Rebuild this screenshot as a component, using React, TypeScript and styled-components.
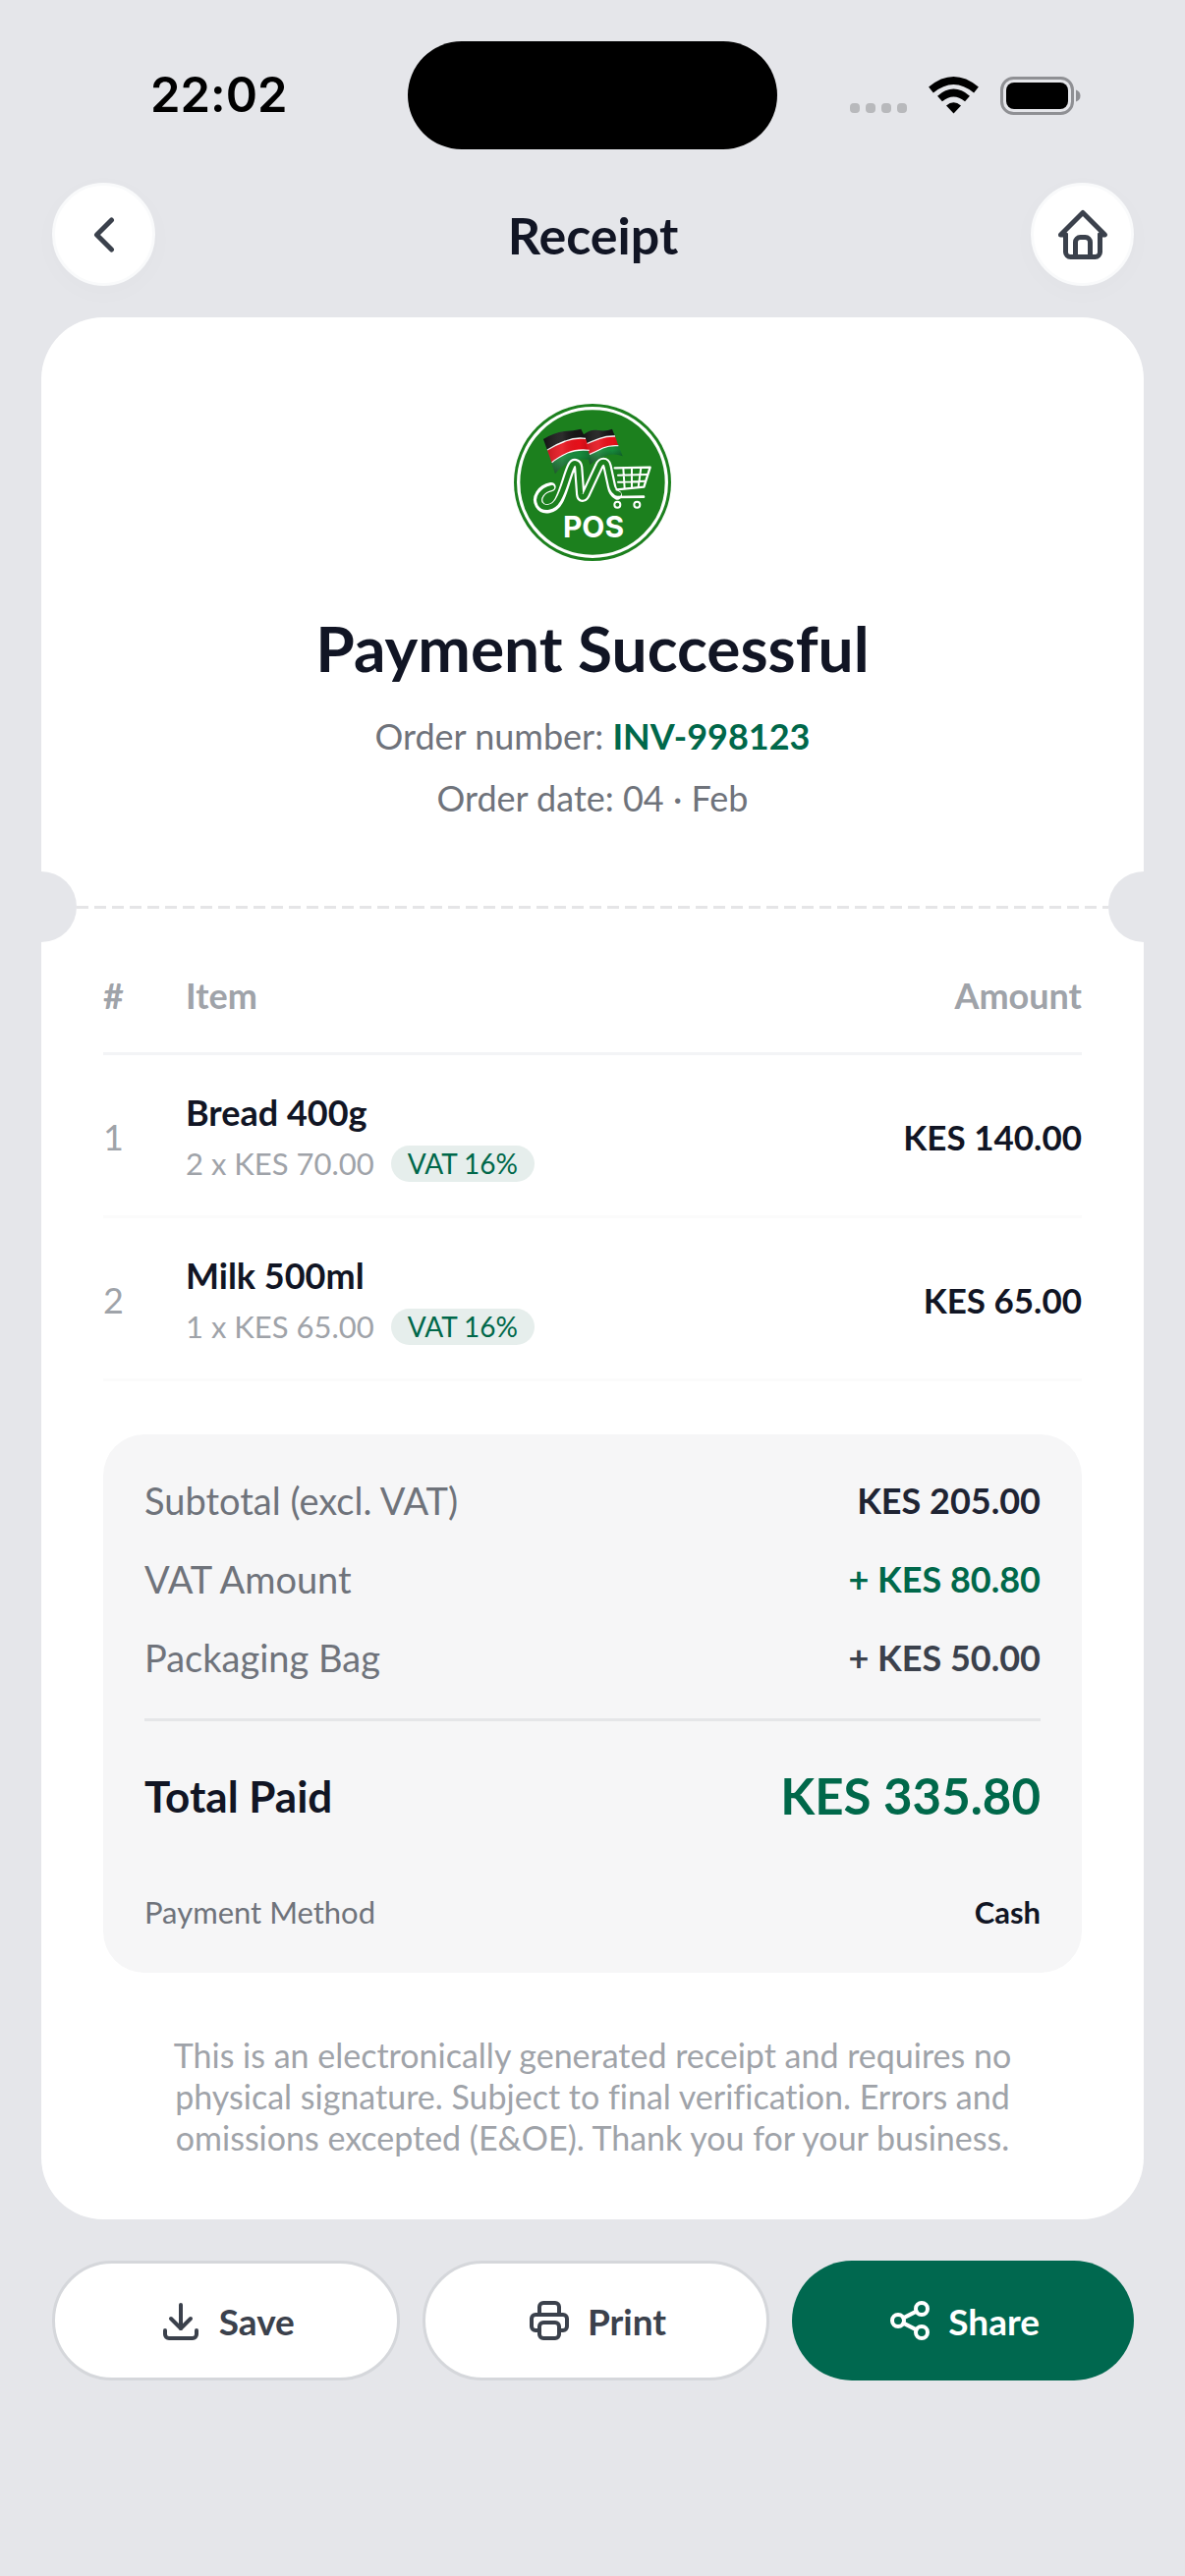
import React from 'react'
import styled, { createGlobalStyle, css } from 'styled-components'
import {
  TbChevronLeft,
  TbDownload,
  TbHome,
  TbPrinter,
  TbShare,
} from 'react-icons/tb'

const GlobalStyle = createGlobalStyle`
  * {
    box-sizing: border-box;
  }

  body {
    margin: 0;
    background: #e5e6ea;
    color: #111524;
    font-family: Lato, 'Open Sans', sans-serif;
    font-variant-ligatures: none;
  }

  h1, h2, p, dl, dt, dd {
    margin: 0;
  }
`

const Page = styled.div`
  display: flex;
  flex-direction: column;
  min-height: 100vh;
  padding-bottom: 64px;
`

const StatusBar = styled.div`
  display: grid;
  grid-template-columns: minmax(0, 1fr) auto minmax(0, 1fr);
  align-items: center;
  padding-top: 42px;
`

const Clock = styled.time`
  padding-left: 153px;
  color: #000;
  font-family: Inter, sans-serif;
  font-size: 49px;
  font-weight: 600;
  line-height: 60px;
`

const Island = styled.div`
  width: 376px;
  height: 110px;
  border-radius: 55px;
  background: #000;
`

const Indicators = styled.div`
  display: flex;
  align-items: center;
  justify-content: flex-end;
  gap: 22px;
  padding-right: 106px;
`

const Header = styled.header`
  display: flex;
  align-items: center;
  justify-content: space-between;
  padding: 34px 52px 32px 53px;
`

const Title = styled.h1`
  font-size: 52px;
  font-weight: 700;
  line-height: 60px;
`

const RoundButton = styled.button`
  display: flex;
  align-items: center;
  justify-content: center;
  width: 105px;
  height: 105px;
  padding: 0;
  border: 3px solid #f9fafb;
  border-radius: 50%;
  background: #fff;
  box-shadow: 0 6px 30px rgba(0, 0, 0, 0.02);
  color: #3b414c;
  font-size: 60px;
  cursor: pointer;
`

const Card = styled.main`
  margin: 0 42px;
  padding: 86px 0 62px;
  overflow: hidden;
  border-radius: 63px;
  background: #fff;
`

const Summary = styled.section`
  display: flex;
  flex-direction: column;
  align-items: center;
  padding: 0 63px 43px;
  text-align: center;
`

const Heading = styled.h2`
  margin: 49px 0 20px;
  font-size: 64px;
  font-weight: 700;
  line-height: 76px;
`

const OrderLine = styled.p`
  color: #6f737b;
  font-size: 36px;
  line-height: 63px;

  strong {
    color: #00684a;
    font-weight: 700;
  }
`

const Tear = styled.div`
  display: flex;
  align-items: center;
  height: 72px;
`

const Notch = styled.span<{ $side: 'left' | 'right' }>`
  width: 36px;
  height: 72px;
  border-radius: ${(p) =>
    p.$side === 'left' ? '0 36px 36px 0' : '36px 0 0 36px'};
  background: #e5e6ea;
`

const Perforation = styled.span`
  flex: 1;
  height: 3px;
  background: repeating-linear-gradient(
    90deg,
    #e5e5e7 0 12px,
    transparent 12px 18px
  );
`

const Body = styled.section`
  padding: 0 63px;
`

const Items = styled.table`
  width: 100%;
  border-collapse: collapse;
  font-size: 36px;
  line-height: 42px;

  th {
    padding: 33px 0 37px;
    border-bottom: 3px solid #f3f4f6;
    color: #9fa3a9;
    font-weight: 700;
    text-align: left;
  }

  td {
    padding: 37px 0 34px;
    border-bottom: 3px solid #fbfbfb;
  }

  th:first-child,
  td:first-child {
    width: 84px;
    color: #9fa3a9;
  }

  th:last-child,
  td:last-child {
    text-align: right;
  }
`

const ItemName = styled.div`
  margin-bottom: 13px;
  font-weight: 700;
`

const ItemMeta = styled.div`
  display: flex;
  align-items: center;
  gap: 17px;
  color: #9fa3a9;
  font-size: 31px;
  line-height: 37px;
`

const VatBadge = styled.span`
  padding: 0 17px;
  border-radius: 19px;
  background: #e6eeec;
  color: #00684a;
  font-size: 28px;
`

const Price = styled.td`
  font-size: 35px;
  font-weight: 700;
`

const Totals = styled.dl`
  margin-top: 54px;
  padding: 46px 42px 44px;
  border-radius: 42px;
  background: #f6f6f7;
`

type RowKind = 'line' | 'total' | 'method'

const rowStyles = {
  line: css`
    margin-bottom: 38px;
    font-size: 36px;
    line-height: 42px;

    dt {
      font-size: 38px;
    }
  `,
  total: css`
    margin: 41px 0 70px;
    padding-top: 46px;
    border-top: 3px solid #e5e6e8;
    font-size: 51px;
    line-height: 60px;

    dt {
      color: #111524;
      font-size: 44px;
      font-weight: 700;
    }
  `,
  method: css`
    font-size: 31px;
    line-height: 36px;
  `,
}

const TotalRow = styled.div<{ $kind: RowKind; $color: string }>`
  display: flex;
  align-items: center;
  justify-content: space-between;

  dt {
    color: #6f737b;
  }

  dd {
    color: ${(p) => p.$color};
    font-weight: 700;
  }

  ${(p) => rowStyles[p.$kind]}
`

const Disclaimer = styled.p`
  margin: 63px auto 0;
  max-width: 880px;
  color: #9fa3a9;
  font-size: 34px;
  line-height: 42px;
  text-align: center;
`

const Actions = styled.footer`
  display: flex;
  gap: 23px;
  padding: 42px 52px 0 53px;
`

const ActionButton = styled.button<{ $primary?: boolean }>`
  display: flex;
  flex: 1;
  align-items: center;
  justify-content: center;
  gap: 15px;
  height: 122px;
  padding: 0;
  border: ${(p) => (p.$primary ? 'none' : '3px solid #d5d7db')};
  border-radius: 61px;
  background: ${(p) => (p.$primary ? '#00684f' : '#fff')};
  color: ${(p) => (p.$primary ? '#fff' : '#3b414c')};
  font-family: inherit;
  font-size: 37px;
  font-weight: 700;
  cursor: pointer;

  svg {
    width: 48px;
    height: 48px;
  }
`

interface Item {
  name: string
  detail: string
  vat: string
  amount: string
}

const items: Item[] = [
  {
    name: 'Bread 400g',
    detail: '2 x KES 70.00',
    vat: 'VAT 16%',
    amount: 'KES 140.00',
  },
  {
    name: 'Milk 500ml',
    detail: '1 x KES 65.00',
    vat: 'VAT 16%',
    amount: 'KES 65.00',
  },
]

const totals: { label: string; value: string; kind: RowKind; color: string }[] =
  [
    {
      label: 'Subtotal (excl. VAT)',
      value: 'KES 205.00',
      kind: 'line',
      color: '#1f2433',
    },
    {
      label: 'VAT Amount',
      value: '+ KES 80.80',
      kind: 'line',
      color: '#00684a',
    },
    {
      label: 'Packaging Bag',
      value: '+ KES 50.00',
      kind: 'line',
      color: '#3b414c',
    },
    {
      label: 'Total Paid',
      value: 'KES 335.80',
      kind: 'total',
      color: '#00684a',
    },
    {
      label: 'Payment Method',
      value: 'Cash',
      kind: 'method',
      color: '#111524',
    },
  ]

const SignalDots = () => (
  <svg width="58" height="38" viewBox="0 0 58 38" fill="#b8b9bc">
    {[0, 16, 32, 48].map((x) => (
      <rect key={x} x={x} y="27" width="10" height="10" rx="4" />
    ))}
  </svg>
)

const WifiIcon = () => (
  <svg width="51" height="38" viewBox="0 0 51 38">
    <path d="M25.5 37.5 L18 29.5 Q25.5 23 33 29.5 Z" />
    <g fill="none" stroke="#000" strokeWidth="7.5">
      <path d="M11.5 22.5 Q25.5 10.5 39.5 22.5" />
      <path d="M2.5 13.5 Q25.5 -5.5 48.5 13.5" />
    </g>
  </svg>
)

const BatteryIcon = () => (
  <svg width="82" height="39" viewBox="0 0 82 39">
    <rect
      x="1.5"
      y="1.5"
      width="72"
      height="36"
      rx="12"
      fill="none"
      stroke="#8f9094"
      strokeWidth="3"
    />
    <rect x="6" y="6" width="63" height="27" rx="8" />
    <path d="M77 13.5 Q81.5 15 81.5 19.5 Q81.5 24 77 25.5 Z" fill="#8f9094" />
  </svg>
)

const Logo = () => (
  <svg
    width="164"
    height="164"
    viewBox="62 56 492 492"
    role="img"
    aria-label="M POS"
  >
    <defs>
      <linearGradient id="flagShade" x1="0" x2="1">
        <stop offset="0" stopColor="#000" stopOpacity="0.2" />
        <stop offset="0.4" stopColor="#fff" stopOpacity="0.1" />
        <stop offset="0.75" stopColor="#000" stopOpacity="0" />
        <stop offset="1" stopColor="#000" stopOpacity="0.2" />
      </linearGradient>
      <linearGradient id="flagGreen" x1="0" x2="0" y1="0" y2="1">
        <stop offset="0.6" stopColor="#178a3c" />
        <stop offset="1" stopColor="#0d4a1c" />
      </linearGradient>
    </defs>
    <circle cx="308" cy="302" r="240" fill="#1c801e" />
    <circle
      cx="308"
      cy="302"
      r="226"
      fill="none"
      stroke="#fff"
      strokeWidth="10"
    />

    {/* back flag */}
    <path d="M278 158 Q300 140 325 143 Q350 147 368 139 L400 222 Q375 212 350 220 Q325 228 300 248 Z" fill="url(#flagGreen)" />
    <path d="M278 158 Q300 140 325 143 Q350 147 368 139 L377 162 Q352 160 330 168 Q308 176 288 186 Z" fill="#151515" />
    <path d="M288 184 Q308 176 330 168 Q352 160 377 161 L387 190 Q360 188 340 197 Q318 208 298 218 Z" fill="#e6101a" />
    <path d="M288 185 Q308 176 330 168 Q352 160 377 161 M298 217 Q318 208 340 197 Q360 188 387 190" fill="none" stroke="#fff" strokeWidth="4" />
    <path d="M278 158 Q300 140 325 143 Q350 147 368 139 L400 222 Q375 212 350 220 Q325 228 300 248 Z" fill="url(#flagShade)" />

    {/* front flag */}
    <path d="M158 170 Q190 150 222 146 Q250 145 273 139 L304 234 Q262 226 232 244 Q208 256 194 276 Z" fill="url(#flagGreen)" />
    <path d="M158 170 Q190 150 222 146 Q250 145 273 139 L287 168 Q255 164 225 176 Q195 188 170 204 Z" fill="#151515" />
    <path d="M170 204 Q195 188 225 176 Q255 164 287 168 L298 204 Q260 200 232 212 Q202 226 184 242 Z" fill="#e6101a" />
    <path d="M170 203 Q195 187 225 176 Q255 164 287 168 M184 241 Q202 226 232 212 Q260 200 298 204" fill="none" stroke="#fff" strokeWidth="4" />
    <path d="M158 170 Q190 150 222 146 Q250 145 273 139 L304 234 Q262 226 232 244 Q208 256 194 276 Z" fill="url(#flagShade)" />

    {/* script M running into the trolley handle */}
    <g fill="none" strokeLinecap="round" strokeLinejoin="round">
      <path
        d="M182 316 C150 322 134 350 146 370 C158 390 190 386 205 358 C222 326 230 280 244 252 C251 239 263 242 265 256 L271 338 C273 352 282 350 287 340 L328 252 C335 236 349 236 353 252 L366 312 Q370 334 384 341"
        stroke="#fff"
        strokeWidth="28"
      />
      <path
        d="M184 318 C152 326 138 350 148 368 C159 384 188 382 203 356 C222 326 230 280 244 252 C251 239 263 242 265 256 L271 338 C273 352 282 350 287 340 L328 252 C335 236 349 236 353 252 L366 312 Q370 332 388 338"
        stroke="#1c801e"
        strokeWidth="15"
      />
      <path d="M382 347 L464 346" stroke="#fff" strokeWidth="8" />
      <path
        d="M376 258 L484 256 L465 316 L382 324"
        stroke="#fff"
        strokeWidth="7"
      />
      <path
        d="M386 280 L476 278 M386 301 L470 298 M402 258 L406 320 M428 258 L428 318 M456 258 L448 316"
        stroke="#fff"
        strokeWidth="6"
      />
      <circle cx="384" cy="370" r="9" stroke="#fff" strokeWidth="6" />
      <circle cx="444" cy="370" r="9" stroke="#fff" strokeWidth="6" />
    </g>
    <text
      x="311"
      y="470"
      textAnchor="middle"
      fill="#fff"
      fontFamily="Inter, sans-serif"
      fontSize="90"
      fontWeight="700"
    >
      POS
    </text>
  </svg>
)

export default function App() {
  return (
    <Page>
      <GlobalStyle />
      <StatusBar>
        <Clock>22:02</Clock>
        <Island />
        <Indicators>
          <SignalDots />
          <WifiIcon />
          <BatteryIcon />
        </Indicators>
      </StatusBar>

      <Header>
        <RoundButton aria-label="Back">
          <TbChevronLeft />
        </RoundButton>
        <Title>Receipt</Title>
        <RoundButton aria-label="Home">
          <TbHome />
        </RoundButton>
      </Header>

      <Card>
        <Summary>
          <Logo />
          <Heading>Payment Successful</Heading>
          <OrderLine>
            Order number: <strong>INV-998123</strong>
          </OrderLine>
          <OrderLine>Order date: 04 · Feb</OrderLine>
        </Summary>

        <Tear>
          <Notch $side="left" />
          <Perforation />
          <Notch $side="right" />
        </Tear>

        <Body>
          <Items>
            <thead>
              <tr>
                <th>#</th>
                <th>Item</th>
                <th>Amount</th>
              </tr>
            </thead>
            <tbody>
              {items.map((item, i) => (
                <tr key={item.name}>
                  <td>{i + 1}</td>
                  <td>
                    <ItemName>{item.name}</ItemName>
                    <ItemMeta>
                      {item.detail}
                      <VatBadge>{item.vat}</VatBadge>
                    </ItemMeta>
                  </td>
                  <Price>{item.amount}</Price>
                </tr>
              ))}
            </tbody>
          </Items>

          <Totals>
            {totals.map((row) => (
              <TotalRow key={row.label} $kind={row.kind} $color={row.color}>
                <dt>{row.label}</dt>
                <dd>{row.value}</dd>
              </TotalRow>
            ))}
          </Totals>

          <Disclaimer>
            This is an electronically generated receipt and requires no physical
            signature. Subject to final verification. Errors and omissions
            excepted (E&OE). Thank you for your business.
          </Disclaimer>
        </Body>
      </Card>

      <Actions>
        <ActionButton>
          <TbDownload />
          Save
        </ActionButton>
        <ActionButton>
          <TbPrinter />
          Print
        </ActionButton>
        <ActionButton $primary>
          <TbShare />
          Share
        </ActionButton>
      </Actions>
    </Page>
  )
}
